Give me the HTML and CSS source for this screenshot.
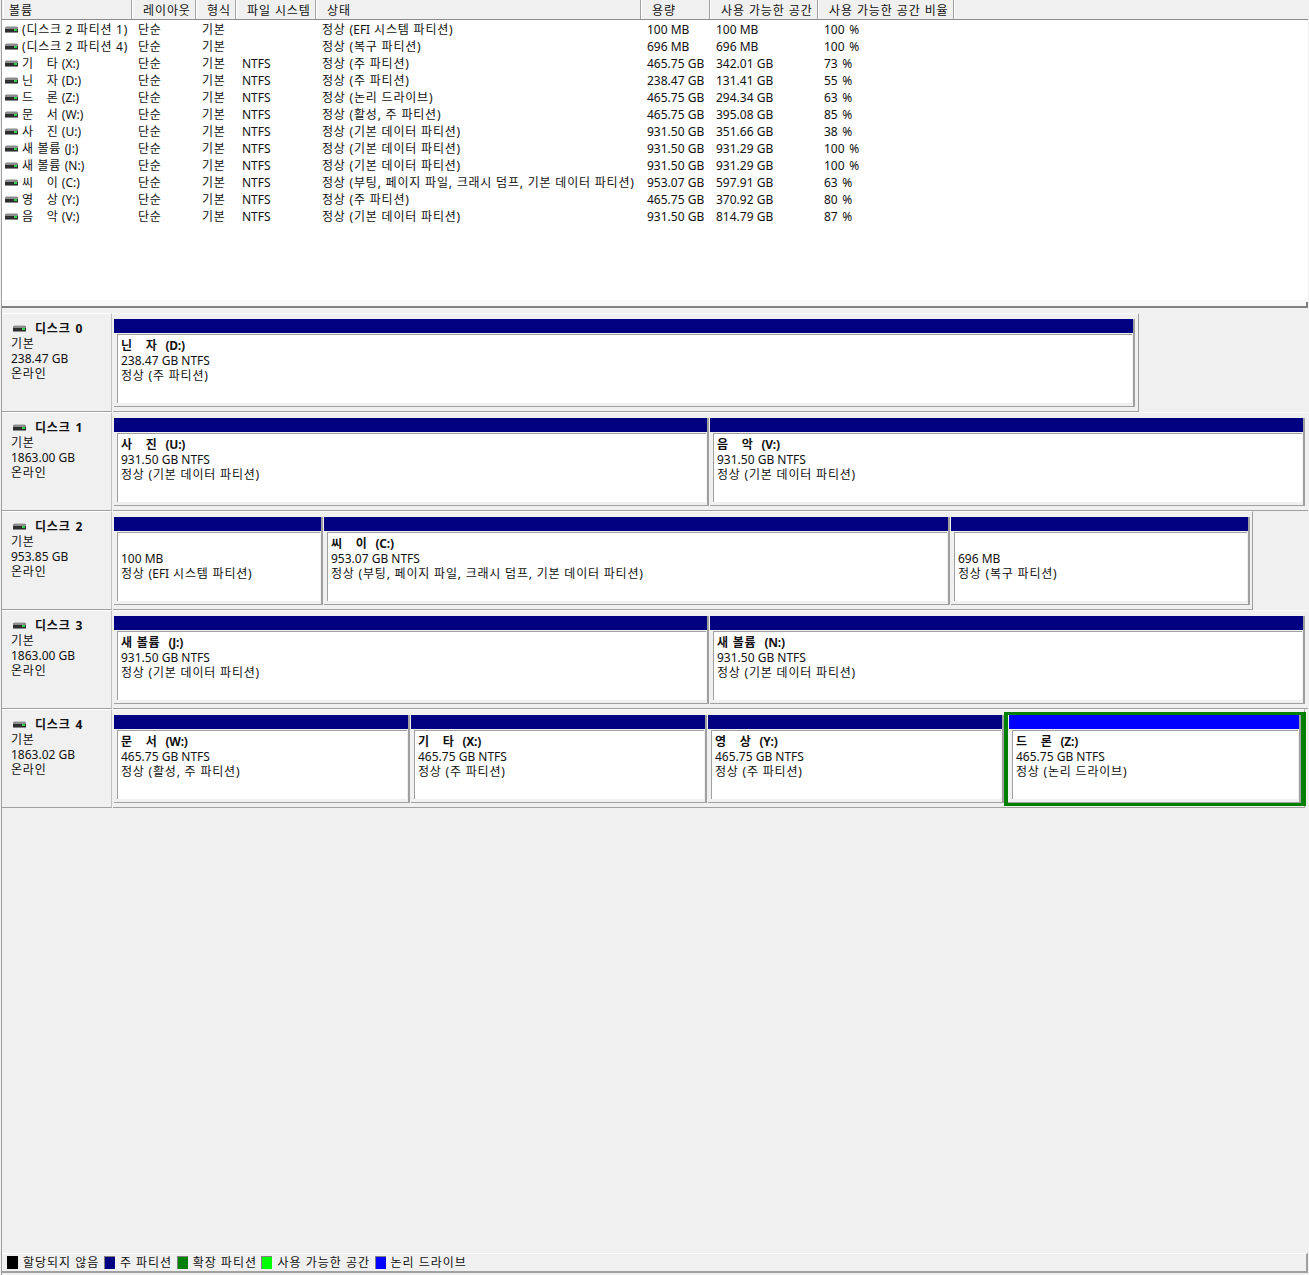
FILE: index.html
```html
<!DOCTYPE html>
<html lang="ko">
<head>
<meta charset="utf-8">
<title>디스크 관리</title>
<link rel="stylesheet" href="styles.css">
</head>
<body>
<svg class="defs" width="0" height="0"><defs><g id="drive"><rect x="1" y="0" width="11" height="1" fill="#c4c4c4"/><rect x="0" y="1" width="13" height="2" fill="#8c8c8c"/><rect x="0" y="3" width="13" height="3" fill="#2e2e2e"/><rect x="0" y="6" width="13" height="1" fill="#8a8a8a"/><rect x="9" y="3" width="3" height="2" fill="#2fd24a"/></g></defs></svg>
<div class="app">
  <section class="list">
    <div class="row head">
      <div class="hc first">볼륨</div><div class="hc">레이아웃</div><div class="hc">형식</div><div class="hc">파일 시스템</div><div class="hc">상태</div><div class="hc">용량</div><div class="hc">사용 가능한 공간</div><div class="hc">사용 가능한 공간 비율</div><div class="hc fill"></div>
    </div>
    <div class="rows">
      <div class="row"><div class="c vol"><svg class="ic" width="13" height="7"><use href="#drive"/></svg>(디스크 2 파티션 1)</div><div class="c">단순</div><div class="c">기본</div><div class="c"></div><div class="c">정상 <span class="lat">(EFI</span> 시스템 파티션)</div><div class="c">100 MB</div><div class="c">100 MB</div><div class="c">100 %</div></div>
      <div class="row"><div class="c vol"><svg class="ic" width="13" height="7"><use href="#drive"/></svg>(디스크 2 파티션 4)</div><div class="c">단순</div><div class="c">기본</div><div class="c"></div><div class="c">정상 (복구 파티션)</div><div class="c">696 MB</div><div class="c">696 MB</div><div class="c">100 %</div></div>
      <div class="row"><div class="c vol tight"><svg class="ic" width="13" height="7"><use href="#drive"/></svg><span>기　타 <span class="lat">(X:)</span></span></div><div class="c">단순</div><div class="c">기본</div><div class="c">NTFS</div><div class="c">정상 (주 파티션)</div><div class="c">465.75 GB</div><div class="c">342.01 GB</div><div class="c">73 %</div></div>
      <div class="row"><div class="c vol tight"><svg class="ic" width="13" height="7"><use href="#drive"/></svg><span>닌　자 <span class="lat">(D:)</span></span></div><div class="c">단순</div><div class="c">기본</div><div class="c">NTFS</div><div class="c">정상 (주 파티션)</div><div class="c">238.47 GB</div><div class="c">131.41 GB</div><div class="c">55 %</div></div>
      <div class="row"><div class="c vol tight"><svg class="ic" width="13" height="7"><use href="#drive"/></svg><span>드　론 <span class="lat">(Z:)</span></span></div><div class="c">단순</div><div class="c">기본</div><div class="c">NTFS</div><div class="c">정상 (논리 드라이브)</div><div class="c">465.75 GB</div><div class="c">294.34 GB</div><div class="c">63 %</div></div>
      <div class="row"><div class="c vol tight"><svg class="ic" width="13" height="7"><use href="#drive"/></svg><span>문　서 <span class="lat">(W:)</span></span></div><div class="c">단순</div><div class="c">기본</div><div class="c">NTFS</div><div class="c">정상 (활성, 주 파티션)</div><div class="c">465.75 GB</div><div class="c">395.08 GB</div><div class="c">85 %</div></div>
      <div class="row"><div class="c vol tight"><svg class="ic" width="13" height="7"><use href="#drive"/></svg><span>사　진 <span class="lat">(U:)</span></span></div><div class="c">단순</div><div class="c">기본</div><div class="c">NTFS</div><div class="c">정상 (기본 데이터 파티션)</div><div class="c">931.50 GB</div><div class="c">351.66 GB</div><div class="c">38 %</div></div>
      <div class="row"><div class="c vol"><svg class="ic" width="13" height="7"><use href="#drive"/></svg><span>새 볼륨 <span class="lat">(J:)</span></span></div><div class="c">단순</div><div class="c">기본</div><div class="c">NTFS</div><div class="c">정상 (기본 데이터 파티션)</div><div class="c">931.50 GB</div><div class="c">931.29 GB</div><div class="c">100 %</div></div>
      <div class="row"><div class="c vol"><svg class="ic" width="13" height="7"><use href="#drive"/></svg><span>새 볼륨 <span class="lat">(N:)</span></span></div><div class="c">단순</div><div class="c">기본</div><div class="c">NTFS</div><div class="c">정상 (기본 데이터 파티션)</div><div class="c">931.50 GB</div><div class="c">931.29 GB</div><div class="c">100 %</div></div>
      <div class="row"><div class="c vol tight"><svg class="ic" width="13" height="7"><use href="#drive"/></svg><span>씨　이 <span class="lat">(C:)</span></span></div><div class="c">단순</div><div class="c">기본</div><div class="c">NTFS</div><div class="c">정상 (부팅, 페이지 파일, 크래시 덤프, 기본 데이터 파티션)</div><div class="c">953.07 GB</div><div class="c">597.91 GB</div><div class="c">63 %</div></div>
      <div class="row"><div class="c vol tight"><svg class="ic" width="13" height="7"><use href="#drive"/></svg><span>영　상 <span class="lat">(Y:)</span></span></div><div class="c">단순</div><div class="c">기본</div><div class="c">NTFS</div><div class="c">정상 (주 파티션)</div><div class="c">465.75 GB</div><div class="c">370.92 GB</div><div class="c">80 %</div></div>
      <div class="row"><div class="c vol tight"><svg class="ic" width="13" height="7"><use href="#drive"/></svg><span>음　악 <span class="lat">(V:)</span></span></div><div class="c">단순</div><div class="c">기본</div><div class="c">NTFS</div><div class="c">정상 (기본 데이터 파티션)</div><div class="c">931.50 GB</div><div class="c">814.79 GB</div><div class="c">87 %</div></div>
    </div>
  </section>

  <section class="disks">
    <div class="disk">
      <div class="info"><div class="dname"><svg class="ic2" width="13" height="7"><use href="#drive"/></svg><b>디스크 0</b></div><div class="ko">기본</div><div>238.47 GB</div><div class="ko">온라인</div></div>
      <div class="parts">
        <div class="part w1021"><div class="frame"><div class="bar"></div><div class="box"><b>닌　자 <span class="dr">(D:)</span></b><div>238.47 GB NTFS</div><div class="ko">정상 (주 파티션)</div></div></div></div>
      </div>
    </div>
    <div class="disk">
      <div class="info"><div class="dname"><svg class="ic2" width="13" height="7"><use href="#drive"/></svg><b>디스크 1</b></div><div class="ko">기본</div><div>1863.00 GB</div><div class="ko">온라인</div></div>
      <div class="parts">
        <div class="part w595"><div class="frame"><div class="bar"></div><div class="box"><b>사　진 <span class="dr">(U:)</span></b><div>931.50 GB NTFS</div><div class="ko">정상 (기본 데이터 파티션)</div></div></div></div>
        <div class="part w595"><div class="frame"><div class="bar"></div><div class="box"><b>음　악 <span class="dr">(V:)</span></b><div>931.50 GB NTFS</div><div class="ko">정상 (기본 데이터 파티션)</div></div></div></div>
      </div>
    </div>
    <div class="disk">
      <div class="info"><div class="dname"><svg class="ic2" width="13" height="7"><use href="#drive"/></svg><b>디스크 2</b></div><div class="ko">기본</div><div>953.85 GB</div><div class="ko">온라인</div></div>
      <div class="parts">
        <div class="part w209"><div class="frame"><div class="bar"></div><div class="box"><b>&nbsp;</b><div>100 MB</div><div class="ko">정상 <span class="lat">(EFI</span> 시스템 파티션)</div></div></div></div>
        <div class="part w626"><div class="frame"><div class="bar"></div><div class="box"><b>씨　이 <span class="dr">(C:)</span></b><div>953.07 GB NTFS</div><div class="ko">정상 (부팅, 페이지 파일, 크래시 덤프, 기본 데이터 파티션)</div></div></div></div>
        <div class="part w299"><div class="frame"><div class="bar"></div><div class="box"><b>&nbsp;</b><div>696 MB</div><div class="ko">정상 (복구 파티션)</div></div></div></div>
      </div>
    </div>
    <div class="disk">
      <div class="info"><div class="dname"><svg class="ic2" width="13" height="7"><use href="#drive"/></svg><b>디스크 3</b></div><div class="ko">기본</div><div>1863.00 GB</div><div class="ko">온라인</div></div>
      <div class="parts">
        <div class="part w595"><div class="frame"><div class="bar"></div><div class="box"><b>새 볼륨 <span class="dr">(J:)</span></b><div>931.50 GB NTFS</div><div class="ko">정상 (기본 데이터 파티션)</div></div></div></div>
        <div class="part w595"><div class="frame"><div class="bar"></div><div class="box"><b>새 볼륨 <span class="dr">(N:)</span></b><div>931.50 GB NTFS</div><div class="ko">정상 (기본 데이터 파티션)</div></div></div></div>
      </div>
    </div>
    <div class="disk">
      <div class="info"><div class="dname"><svg class="ic2" width="13" height="7"><use href="#drive"/></svg><b>디스크 4</b></div><div class="ko">기본</div><div>1863.02 GB</div><div class="ko">온라인</div></div>
      <div class="parts">
        <div class="part w296"><div class="frame"><div class="bar"></div><div class="box"><b>문　서 <span class="dr">(W:)</span></b><div>465.75 GB NTFS</div><div class="ko">정상 (활성, 주 파티션)</div></div></div></div>
        <div class="part w296"><div class="frame"><div class="bar"></div><div class="box"><b>기　타 <span class="dr">(X:)</span></b><div>465.75 GB NTFS</div><div class="ko">정상 (주 파티션)</div></div></div></div>
        <div class="part w296"><div class="frame"><div class="bar"></div><div class="box"><b>영　상 <span class="dr">(Y:)</span></b><div>465.75 GB NTFS</div><div class="ko">정상 (주 파티션)</div></div></div></div>
        <div class="part w293 sel"><div class="frame"><div class="bar logical"></div><div class="box"><b>드　론 <span class="dr">(Z:)</span></b><div>465.75 GB NTFS</div><div class="ko">정상 (논리 드라이브)</div></div></div></div>
      </div>
    </div>
  </section>

  <footer class="legend">
    <span class="sw black"></span><span class="lt">할당되지 않음</span>
    <span class="sw navy"></span><span class="lt">주 파티션</span>
    <span class="sw green"></span><span class="lt">확장 파티션</span>
    <span class="sw lime"></span><span class="lt">사용 가능한 공간</span>
    <span class="sw blue"></span><span class="lt">논리 드라이브</span>
  </footer>
</div>
</body>
</html>
```
FILE: styles.css
```css
html, body { margin: 0; padding: 0; }
body {
  background: #f0f0f0;
  color: #111;
  font-family: "Noto Sans", "Noto Sans CJK KR", sans-serif;
  font-size: 12px;
  line-height: 15px;
  overflow: hidden;
}
.defs { position: absolute; }
.ko { letter-spacing: 0.8px; }
.lat { letter-spacing: 0; }
.app {
  width: 1307px;
  height: 1275px;
  box-sizing: border-box;
  display: flex;
  flex-direction: column;
  border-left: 1px solid #a0a0a0;
  margin-left: 1px;
}

/* volume list */
.list {
  position: relative;
  height: 308px;
  box-sizing: border-box;
  background: linear-gradient(#fff 300px, #f8f8f8 300px);
  border-bottom: 2px solid #808080;
  flex: none;
}
.list::after {
  content: "";
  position: absolute;
  right: 0;
  bottom: 0;
  width: 2px;
  height: 4px;
  background: #808080;
}
.row {
  display: grid;
  grid-template-columns: 129px 64px 40px 80px 325px 69px 108px 136px 1fr;
  height: 17px;
  line-height: 17px;
  white-space: nowrap;
}
.head { height: 20px; background: #f0f0f0; border-bottom: 1px solid #8c8c8c; box-sizing: border-box; }
.hc {
  margin: 0 -1px 0 1px;
  padding: 3px 0 0 10px;
  box-sizing: border-box;
  border-left: 1px solid #fff;
  border-right: 1px solid #a0a0a0;
  line-height: 16px;
  letter-spacing: 0.9px;
  overflow: hidden;
}
.hc.first { padding-left: 5px; }
.hc.fill { border-right: 0; margin-right: 0; }
.rows { padding-top: 1px; background: #fff; }
.c { padding-left: 7px; }
.c:nth-child(2), .c:nth-child(3), .c:nth-child(5) { letter-spacing: 0.8px; }
.c:nth-child(8) { word-spacing: 1.5px; }
.vol { padding-left: 3px; display: flex; align-items: center; letter-spacing: 0.8px; word-spacing: -0.3px; }
.vol.tight { word-spacing: -0.6px; }
.ic { margin-right: 4px; flex: none; }

/* graphical disk view */
.disks { padding-top: 5px; flex: none; overflow: hidden; }
.disk { display: flex; height: 99px; overflow: hidden; }
.info {
  width: 110px;
  flex: none;
  box-sizing: border-box;
  padding: 6px 0 0 9px;
  border-right: 1px solid #c0c0c0;
  border-bottom: 1px solid #a0a0a0;
  border-top: 1px solid #fff;
  line-height: 15px;
}
.dname { display: flex; align-items: center; height: 17px; margin-bottom: -1px; padding-left: 2px; letter-spacing: 0.8px; word-spacing: 1px; }
.ic2 { margin-right: 9px; flex: none; }
.parts { display: flex; padding-left: 1px; }
.part {
  box-sizing: content-box;
  flex: none;
  height: 88px;
  padding: 5px 0 4px 1px;
  border-top: 1px solid #fafafa;
  border-bottom: 1px solid #a0a0a0;
  display: flex;
}
.part:last-child { padding-right: 3px; border-right: 1px solid #a0a0a0; }
.part.w299:last-child { padding-right: 2px; }
.w1021 { width: 1021px; }
.w595 { width: 595px; }
.w209 { width: 209px; }
.w626 { width: 626px; }
.w299 { width: 299px; }
.w296 { width: 296px; }
.w293 { width: 293px; }
.frame {
  flex: 1;
  min-width: 0;
  box-sizing: border-box;
  display: flex;
  flex-direction: column;
  border-right: 2px solid #a0a0a0;
  border-bottom: 1px solid #a0a0a0;
}
.bar { height: 14px; background: #000080; flex: none; }
.bar.logical { background: #0000ff; }
.box {
  flex: 1;
  margin: 1px 1px 3px 3px;
  padding: 3px 0 0 3px;
  background: #fff;
  border-top: 1px solid #a0a0a0;
  border-left: 1px solid #a0a0a0;
  line-height: 15px;
  white-space: nowrap;
  overflow: hidden;
}
.box b { display: block; letter-spacing: 0.8px; }
.dr { margin-left: 4px; letter-spacing: -0.2px; }
.part.sel { padding-left: 4px; }
.sel .frame {
  padding-left: 1px;
  box-shadow: 0 0 0 3px #008000, -1px 0 0 3px #008000, 2px 0 0 3px #008000;
}

/* legend */
.legend {
  margin-top: auto;
  height: 20px;
  box-sizing: border-box;
  border-top: 1px solid #fff;
  border-right: 2px solid #a0a0a0;
  border-bottom: 2px solid #a0a0a0;
  margin-bottom: 2px;
  display: flex;
  align-items: center;
  padding-left: 5px;
}
.sw { width: 11px; height: 13px; box-sizing: border-box; flex: none; margin-right: 5px; border-left: 1px solid #808080; border-top: 1px solid #808080; }
.lt { margin-right: 4.5px; letter-spacing: 1px; }
.black { background: #000; border-color: #000; }
.navy { background: #000080; }
.green { background: #008000; }
.lime { background: #00ff00; }
.blue { background: #0000ff; }
```
